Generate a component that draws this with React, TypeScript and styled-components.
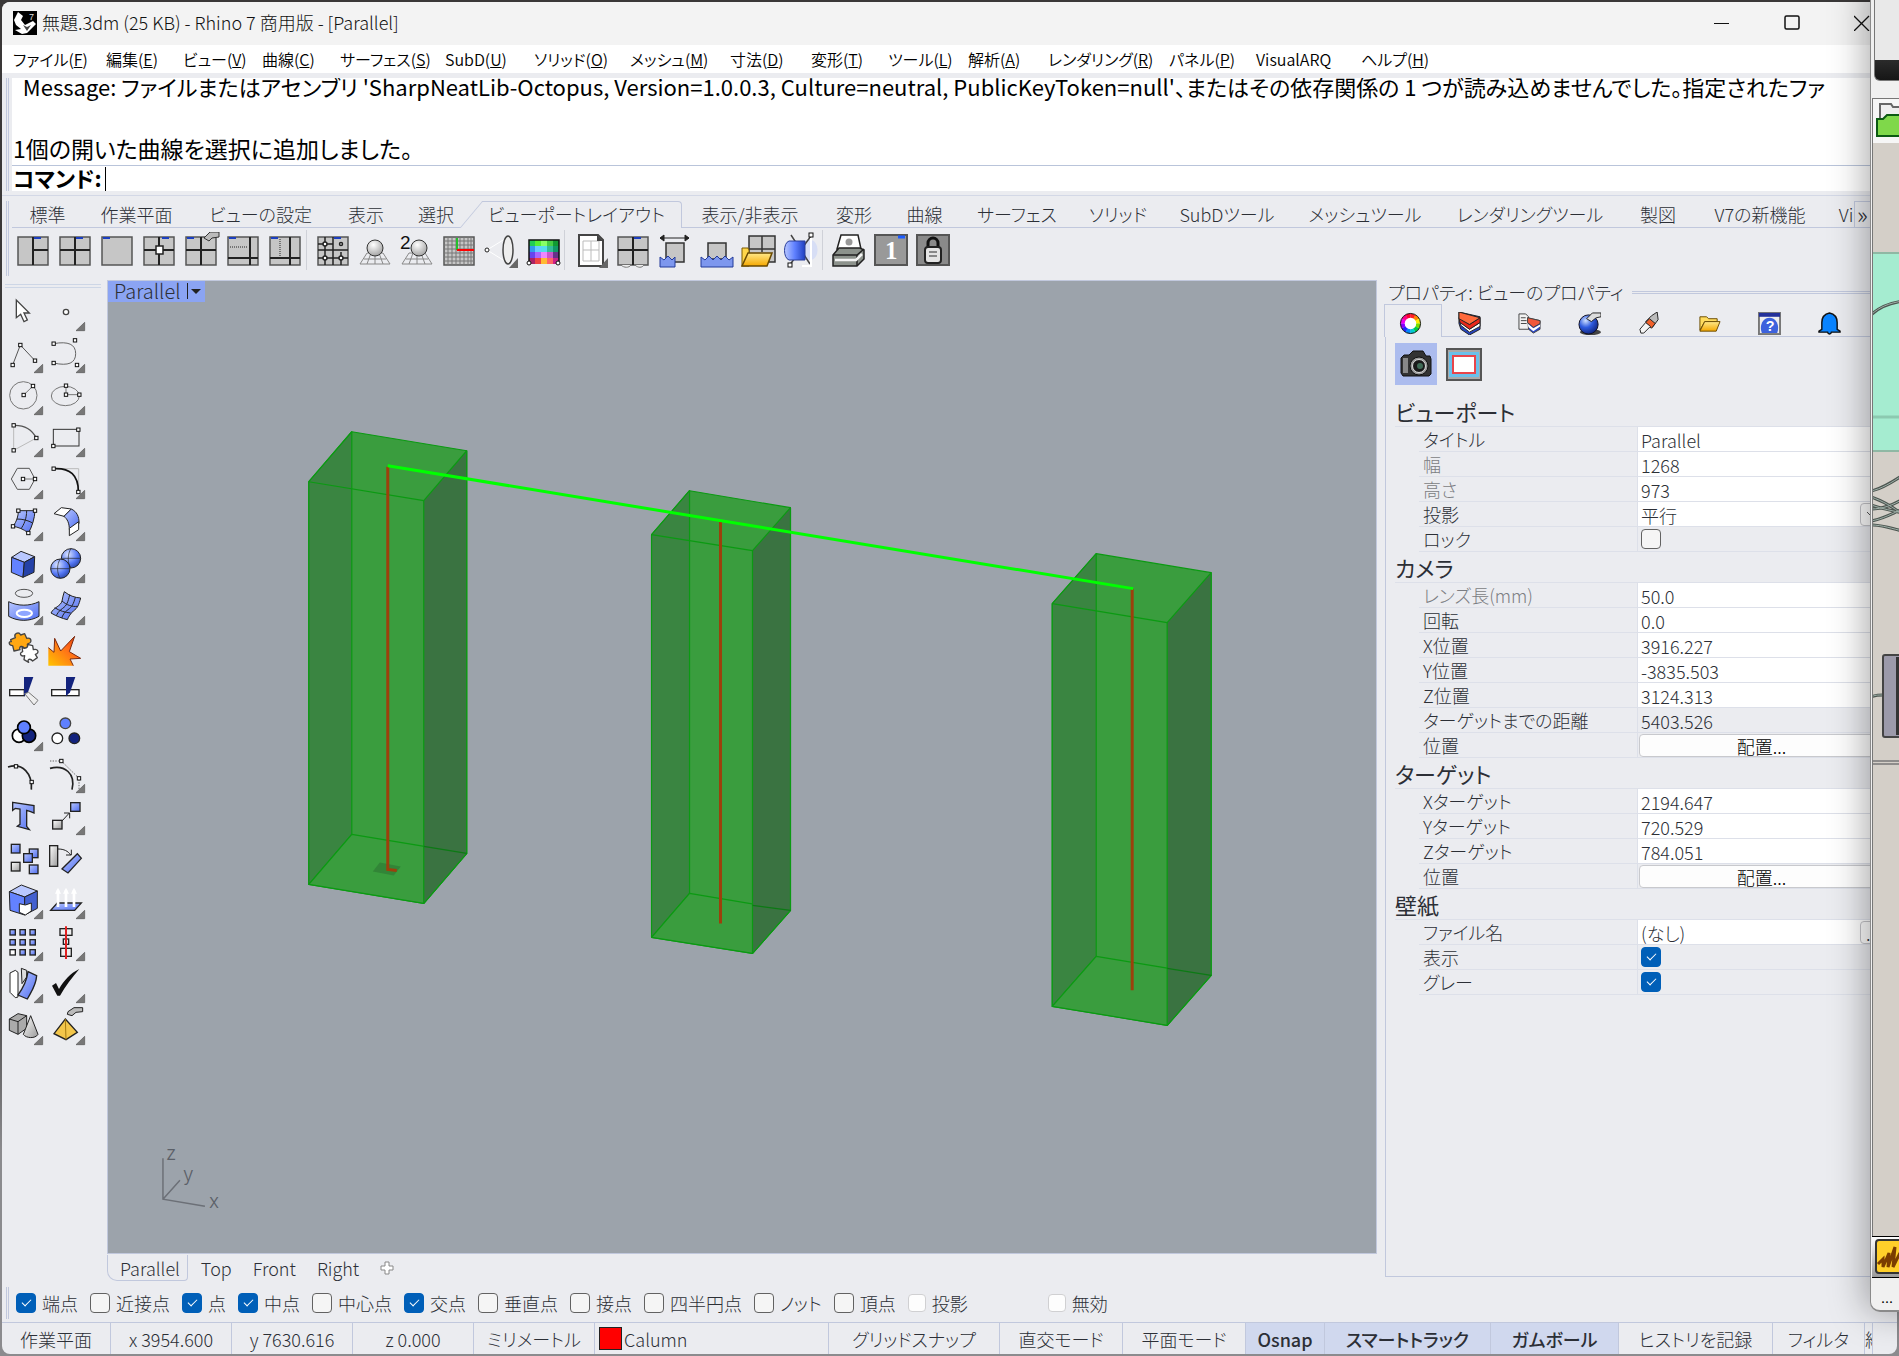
import React, { useState } from "react";
import styled, { createGlobalStyle, css } from "styled-components";

const C = {
  chrome: "#ebecf0",
  line: "#c1c8dd",
  soft: "#dde0e9",
  text: "#2c2f36",
  dim: "#7b7d82",
  blue: "#005fb8",
  active: "#d0d8ee",
  viewport: "#9ca3ab",
};

const Global = createGlobalStyle`
  *, *::before, *::after { box-sizing: border-box; }
  html, body { margin: 0; height: 100%; background: #3a3838; overflow: hidden; }
  body, button, input, select {
    font-family: "Noto Sans CJK JP", "Noto Sans", sans-serif;
    font-size: 18px;
    font-weight: 300;
    line-height: 24px;
    font-feature-settings: "palt";
    color: ${C.text};
  }
  button { background: none; border: 0; padding: 0; margin: 0; white-space: nowrap; }
  svg { display: block; }
`;

const Desktop = styled.div`
  position: relative;
  height: 100vh;
  padding: 2px;
  overflow: hidden;
  background: linear-gradient(#3a3838 0, #3a3838 70%, #8b8b8e 85%);
`;

const MainWindow = styled.div`
  display: flex;
  flex-direction: column;
  height: 100%;
  background: ${C.chrome};
  border-radius: 8px;
  overflow: hidden;
`;

/* ---------- title, menu, command ---------- */
const TitleBar = styled.header`
  display: flex;
  align-items: center;
  flex: 0 0 43px;
  padding: 0 0 2px 11px;
  background: #f3f3f3;
`;
const TitleText = styled.h1`
  flex: 1;
  margin: 0 0 0 5px;
  padding-bottom: 2px;
  font-size: 18px;
  font-weight: 300;
  color: #111;
`;
const WinButton = styled.button`
  width: 70px;
  height: 40px;
  display: grid;
  place-items: center;
`;
const MenuBar = styled.nav`
  display: flex;
  align-items: center;
  flex: 0 0 28px;
  padding-left: 11px;
  background: #fff;
`;
const MenuItem = styled.button<{ $w: number }>`
  flex: 0 0 ${(p) => p.$w}px;
  text-align: left;
  font-size: 16px;
  font-weight: 350;
  color: #000;
`;
const CommandArea = styled.section`
  display: flex;
  flex: 0 0 123px;
  padding: 5px 0 4px 4px;
  border-bottom: 1px solid #d3d8e6;
`;
const Grip = styled.div`
  flex: 0 0 3px;
  margin-right: 3px;
  border: solid ${C.line};
  border-width: 0 1px;
`;
const CommandBody = styled.div`
  flex: 1;
  min-width: 0;
  background: #fff;
`;
const History = styled.div`
  display: flex;
  flex-direction: column;
  justify-content: flex-end;
  height: 88px;
  overflow: hidden;
  border-bottom: 1px solid #b9c4da;
  color: #000;
  padding: 0 0 1px 1px;
`;
const HistoryLine = styled.p<{ $log?: boolean }>`
  margin: 0;
  flex: 0 0 31px;
  font-size: ${(p) => (p.$log ? 22 : 23)}px;
  font-weight: 400;
  line-height: 31px;
  white-space: pre;
`;
const Prompt = styled.div`
  display: flex;
  align-items: center;
  height: 25px;
  color: #000;
`;
const PromptLabel = styled.label`
  font-size: 22px;
  line-height: 22px;
  font-weight: 700;
  padding: 0 3px 3px 1px;
`;
const PromptInput = styled.input`
  flex: 1;
  height: 24px;
  border: 0;
  border-left: 1px solid #000;
  outline: 0;
  background: none;
  font-size: 22px;
`;

/* ---------- tool tabs ---------- */
const ToolArea = styled.section`
  display: flex;
  flex: 0 0 84px;
  padding: 5px 0 4px 4px;
`;
const ToolBody = styled.div`
  flex: 1;
  min-width: 0;
`;
const TabRow = styled.div`
  display: flex;
  height: 27px;
  padding-right: 5px;
`;
const TabStrip = styled.div`
  display: flex;
  flex: 1;
  min-width: 0;
  overflow: hidden;
  box-shadow: inset 0 -1px ${C.line};
`;
const ToolTab = styled.button<{ $active?: boolean; $w: number }>`
  position: relative;
  flex: 0 0 ${(p) => p.$w}px;
  padding-bottom: 2px;
  text-align: center;
  isolation: isolate;
  ${(p) =>
    p.$active &&
    css`
      &::before, &::after {
        content: "";
        position: absolute;
        z-index: -1;
        top: 0;
        bottom: 0;
        background: ${C.chrome};
        border: 1px solid ${C.line};
        border-bottom: 0;
      }
      &::before { left: 0; width: 60px; border-right: 0; transform: skewX(-40deg); }
      &::after { left: 30px; right: 0; border-left: 0; border-top-right-radius: 4px; }
    `}
`;
const MoreTabs = styled.button`
  flex: 0 0 38px;
  padding: 0 0 4px 2px;
  text-align: left;
  font-size: 24px;
  border: 1px solid ${C.line};
`;
const ToolRow = styled.div`
  display: flex;
  align-items: center;
  height: 44px;
`;
const ToolButton = styled.button`
  flex: 0 0 42px;
  height: 36px;
`;
const ToolSep = styled.i`
  flex: 0 0 6px;
  height: 40px;
  border-left: 1px solid #cfd1d8;
`;

/* ---------- work area ---------- */
const Work = styled.main`
  display: flex;
  flex: 1;
  min-height: 0;
`;
const Palette = styled.aside`
  flex: 0 0 105px;
`;
const PaletteGrip = styled.div`
  height: 4px;
  margin: 4px 6px 7px 3px;
  border: solid #cdd6e6;
  border-width: 1px 0;
`;
const PaletteGrid = styled.div`
  display: grid;
  grid-template-columns: 42px 42px;
  grid-auto-rows: 42px;
  padding-left: 6px;
`;
const PaletteButton = styled.button`
  width: 36px;
  height: 36px;
`;
const Center = styled.div`
  display: flex;
  flex-direction: column;
  flex: 1;
  min-width: 0;
`;
const Viewport = styled.div`
  position: relative;
  flex: 1;
  min-height: 0;
  background: ${C.viewport};
  border: 1px solid ${C.line};
`;
const ViewportLabel = styled.button`
  position: absolute;
  left: 0;
  top: 0;
  display: flex;
  align-items: center;
  gap: 5px;
  height: 21px;
  padding: 0 4px 2px 6px;
  line-height: 20px;
  font-size: 20px;
  background: #8ba4f3;
`;
const ViewTabs = styled.div`
  display: flex;
  align-items: center;
  flex: 0 0 28px;
  gap: 21px;
`;
const ViewTab = styled.button<{ $active?: boolean }>`
  height: 26px;
  ${(p) =>
    p.$active &&
    css`
      padding: 0 7px 0 12px;
      margin-right: -8px;
      border: 1px solid ${C.line};
      border-top: 0;
      border-radius: 0 0 4px 10px;
    `}
`;

/* ---------- properties ---------- */
const Properties = styled.aside`
  display: flex;
  flex-direction: column;
  flex: 0 0 520px;
  padding: 0 13px 5px 7px;
`;
const PanelTitle = styled.div`
  display: flex;
  align-items: center;
  height: 24px;
  gap: 8px;
  padding-left: 4px;
  &::after {
    content: "";
    flex: 1;
    height: 3px;
    border: solid ${C.line};
    border-width: 1px 0;
  }
`;
const PanelTabs = styled.div`
  display: flex;
  height: 33px;
  box-shadow: inset 0 -1px ${C.line};
`;
const PanelTab = styled.button<{ $active?: boolean }>`
  display: grid;
  place-items: center;
  flex: 0 0 60px;
  padding: 5px 5px 0 0;
  ${(p) =>
    p.$active &&
    css`
      flex-basis: 58px;
      background: ${C.chrome};
      border: 1px solid ${C.line};
      border-bottom: 0;
    `}
`;
const PanelBody = styled.div`
  flex: 1;
  min-height: 0;
  margin-left: 1px;
  padding: 6px 0 0 9px;
  border: 1px solid ${C.line};
  border-width: 0 0 1px 1px;
`;
const ModeRow = styled.div`
  display: flex;
  gap: 6px;
  margin-bottom: 11px;
`;
const ModeButton = styled.button<{ $active?: boolean }>`
  width: 42px;
  height: 42px;
  display: grid;
  place-items: center;
  background: ${(p) => (p.$active ? "#acbcee" : "none")};
`;
const SectionTitle = styled.h2`
  margin: 0;
  height: 31px;
  line-height: 30px;
  font-size: 22px;
  font-weight: 400;
  border-bottom: 1px solid ${C.soft};
`;
const PropRow = styled.div`
  display: grid;
  grid-template-columns: 219px 1fr;
  height: 25px;
  margin-left: 24px;
  border-bottom: 1px solid ${C.soft};
`;
const PropLabel = styled.label<{ $dim?: boolean }>`
  padding: 1px 0 0 4px;
  line-height: 23px;
  color: ${(p) => (p.$dim ? C.dim : C.text)};
  border-right: 1px solid ${C.soft};
`;
const PropInput = styled.input`
  width: 100%;
  min-width: 0;
  height: 24px;
  padding: 1px 0 0 3px;
  border: 0;
  background: #fff;
  outline: 0;
  &:disabled { background: none; color: ${C.text}; }
`;
const Split = styled.div`
  display: flex;
  background: #fff;
`;
const PropSelect = styled.select`
  flex: 1;
  height: 24px;
  padding: 1px 0 0 3px;
  border: 0;
  appearance: none;
  background: #fff;
`;
const SmallButton = styled.button`
  flex: 0 0 24px;
  height: 23px;
  margin-top: 1px;
  padding-left: 5px;
  line-height: 20px;
  text-align: left;
  border: 1px solid #c4c4c8;
  border-radius: 4px;
  background: #fdfdfd;
`;
const PlaceButton = styled.button`
  height: 23px;
  line-height: 20px;
  margin: 1px 0 0 1px;
  border: 1px solid #c8c9cd;
  border-radius: 4px;
  background: #fdfdfd;
  color: #000;
`;
const Check = styled.input.attrs({ type: "checkbox" })`
  appearance: none;
  position: relative;
  flex: 0 0 20px;
  width: 20px;
  height: 20px;
  margin: 0;
  border: 1px solid #626262;
  border-radius: 4px;
  background: #f5f5f5;
  &:checked { background: ${C.blue}; border-color: ${C.blue}; }
  &:checked::after {
    content: "";
    position: absolute;
    left: 5px;
    top: 5px;
    width: 9px;
    height: 5px;
    border: solid #fff;
    border-width: 0 0 1px 1px;
    transform: rotate(-45deg);
  }
  &:disabled { flex-basis: 18px; height: 18px; border-color: #d0d0d2; background: #fdfdfd; }
`;
const CheckCell = styled.div`
  display: flex;
  align-items: center;
  padding-left: 3px;
`;

/* ---------- bottom bars ---------- */
const SnapBar = styled.section`
  display: flex;
  align-items: center;
  flex: 0 0 40px;
  padding: 4px 0 2px 4px;
`;
const SnapGrip = styled(Grip)`
  height: 32px;
  margin-right: 7px;
`;
const SnapItem = styled.label<{ $after?: number }>`
  display: flex;
  align-items: center;
  gap: 6px;
  margin-right: ${(p) => p.$after ?? 12}px;
`;
const StatusBar = styled.footer`
  display: flex;
  flex: 0 0 32px;
  border-top: 1px solid ${C.line};
`;
const StatusCell = styled.button<{ $w: number; $on?: boolean; $left?: boolean }>`
  display: flex;
  align-items: center;
  justify-content: ${(p) => (p.$left ? "flex-start" : "center")};
  flex: 0 0 ${(p) => p.$w}px;
  overflow: hidden;
  border-right: 1px solid ${C.line};
  ${(p) => p.$on && css`background: ${C.active}; font-weight: 500;`}
`;
const LayerSwatch = styled.i`
  width: 23px;
  height: 23px;
  margin: 0 2px 0 4px;
  background: #f00;
  border: 1px solid #222;
`;

/* ---------- window lying over the right edge ---------- */
const SideWindow = styled.div`
  position: absolute;
  right: -60px;
  top: -20px;
  bottom: 44px;
  width: 89px;
  display: flex;
  flex-direction: column;
  padding-top: 20px;
  background: #f0f0f0;
  border: 2px solid #8a8a8a;
  border-width: 0 0 2px 1px;
  border-radius: 0 0 0 10px;
  box-shadow: -4px 0 36px rgba(0, 0, 0, 0.34);
`;
const SideTitle = styled.div`
  flex: 0 0 81px;
  margin-left: 3px;
  border: 1px solid #777;
  border-top: 0;
  border-radius: 0 0 0 6px;
  background: linear-gradient(#e9e9e9 0, #e9e9e9 60px, #2b2b2b 60px, #161616);
`;
const SideTools = styled.div`
  flex: 0 0 45px;
  margin: 17px 0 0 1px;
  border: 1px solid #777;
  border-bottom: 0;
  background: #f6f6f6;
`;
const SideCanvas = styled.div`
  flex: 1;
  min-height: 0;
  margin-left: 1px;
  overflow: hidden;
  background: #d4cfc8;
  border-left: 1px solid #777;
`;
const SideMarkov = styled.div`
  flex: 0 0 42px;
  margin-left: 1px;
  padding: 2px 3px;
  background: linear-gradient(#fff, #999);
  border: solid #000;
  border-width: 1px 0;
`;
const SideStatus = styled.div`
  flex: 0 0 32px;
  padding: 8px 0 0 10px;
  font-size: 16px;
  line-height: 20px;
  color: #000;
`;

/* ---------- drawing helpers ---------- */
const N = ({ x, y }: { x: number; y: number }) => (
  <rect x={x - 5} y={y - 5} width="10" height="10" fill="#fff" stroke="#111" strokeWidth="3" />
);
const Corner = () => <path d="M104 82V107H78Z" fill="#777" stroke="#555" strokeWidth="2" />;
const Defs = () => (
  <svg width="0" height="0" style={{ position: "absolute" }} aria-hidden="true">
    <defs>
      <linearGradient id="bl" x1="0" y1="0" x2="1" y2="1">
        <stop offset="0" stopColor="#b9c8ff" />
        <stop offset="1" stopColor="#4f6df0" />
      </linearGradient>
      <radialGradient id="ball" cx="0.35" cy="0.3" r="0.8">
        <stop offset="0" stopColor="#dbe5ff" />
        <stop offset="0.6" stopColor="#5578f5" />
        <stop offset="1" stopColor="#24409c" />
      </radialGradient>
      <radialGradient id="globe" cx="0.35" cy="0.3" r="0.8">
        <stop offset="0" stopColor="#cfe0ff" />
        <stop offset="0.45" stopColor="#2f5be0" />
        <stop offset="1" stopColor="#0a1c70" />
      </radialGradient>
      <radialGradient id="gray" cx="0.4" cy="0.3" r="0.8">
        <stop offset="0" stopColor="#fff" />
        <stop offset="1" stopColor="#999" />
      </radialGradient>
      <linearGradient id="gr" x1="0" y1="0" x2="1" y2="1">
        <stop offset="0" stopColor="#fff" />
        <stop offset="1" stopColor="#9a9a9a" />
      </linearGradient>
      <linearGradient id="gold" x1="0" y1="0" x2="0" y2="1">
        <stop offset="0" stopColor="#ffe98a" />
        <stop offset="1" stopColor="#f5a800" />
      </linearGradient>
      <linearGradient id="fire" x1="1" y1="0" x2="0" y2="1">
        <stop offset="0" stopColor="#e03a00" />
        <stop offset="0.4" stopColor="#ff6a1a" />
        <stop offset="1" stopColor="#ffc400" />
      </linearGradient>
      <linearGradient id="tube" x1="0" y1="0" x2="1" y2="0">
        <stop offset="0" stopColor="#b9c8ff" />
        <stop offset="0.5" stopColor="#5f80ff" />
        <stop offset="1" stopColor="#1f3fc0" />
      </linearGradient>
    </defs>
  </svg>
);

const G = "#777";
const K = "#222";

/* palette drawings: 108-unit boxes; the flag tells whether a fly-out corner is shown */
const palette: [string, boolean, React.ReactNode][] = [
  ["選択", false, <path d="M25 15V68L38 58 48 80 58 75 48 54H64Z" fill="#fff" stroke="#444" strokeWidth="4" />],
  ["点", true, <circle cx="48" cy="51" r="8" fill="#fff" stroke="#444" strokeWidth="4" />],
  ["ポリライン", true, <g><path d="M14 84L37 24 81 71" fill="none" stroke="#555" strokeWidth="3" /><N x={14} y={84} /><N x={37} y={24} /><N x={81} y={71} /></g>],
  ["曲線", true, <g><path d="M11 20C55 12 77 22 77 50S55 88 11 78" fill="none" stroke="#666" strokeWidth="3" /><N x={11} y={20} /><N x={75} y={10} /><N x={11} y={78} /><N x={81} y={84} /></g>],
  ["円", true, <g><circle cx="46" cy="49" r="41" fill="none" stroke={G} strokeWidth="3" /><path d="M47 48L75 21" stroke={G} strokeWidth="3" /><N x={47} y={48} /><N x={75} y={21} /></g>],
  ["楕円", true, <g><ellipse cx="46" cy="51" rx="42" ry="29" fill="none" stroke={G} strokeWidth="3" /><path d="M48 20V47H88" fill="none" stroke={G} strokeWidth="3" /><N x={48} y={20} /><N x={48} y={47} /><N x={88} y={47} /></g>],
  ["円弧", true, <g><path d="M17 13V88L85 51" fill="none" stroke="#bbb" strokeWidth="3" /><path d="M17 13C48 12 72 26 85 51" fill="none" stroke="#555" strokeWidth="4" /><N x={17} y={13} /><N x={85} y={51} /><N x={17} y={88} /></g>],
  ["長方形", true, <g><rect x="10" y="25" width="77" height="50" fill="none" stroke="#333" strokeWidth="3" /><N x={85} y={26} /><N x={10} y={75} /></g>],
  ["多角形", true, <g><path d="M10 48L28 16H64L81 48 64 79H28Z" fill="none" stroke="#555" strokeWidth="3" /><path d="M45 48H81" stroke={G} strokeWidth="3" /><N x={45} y={48} /><N x={81} y={48} /></g>],
  ["フィレット", true, <g><path d="M11 17H86V87" fill="none" stroke="#bbb" strokeWidth="3" /><path d="M11 17C60 14 86 36 85 87" fill="none" stroke="#111" strokeWidth="5" /><N x={11} y={17} /><N x={85} y={87} /></g>],
  ["サーフェス", true, <g><path d="M31 17H81C80 40 72 66 61 84 46 72 30 66 15 64 26 50 31 34 31 17Z" fill="url(#bl)" stroke={K} strokeWidth="3" /><path d="M56 17C56 40 48 60 38 72M26 42C44 42 60 46 74 54" fill="none" stroke={K} strokeWidth="3" /><N x={31} y={17} /><N x={81} y={17} /><N x={15} y={64} /><N x={61} y={84} /></g>],
  ["ロフト", true, <g><path d="M12 26L34 8 64 12 42 34Z" fill="#fff" stroke={K} strokeWidth="3" /><path d="M64 12C80 20 88 34 87 56L58 74C58 54 52 42 42 34Z" fill="url(#bl)" stroke={K} strokeWidth="3" /><path d="M58 70L86 50V74L58 92Z" fill="#fff" stroke={K} strokeWidth="3" /></g>],
  ["直方体", true, <g><path d="M39 13L80 29 49 46 11 31Z" fill="#b9c8ff" stroke={K} strokeWidth="3" /><path d="M11 31L49 46 45 91 10 76Z" fill="#6382ff" stroke={K} strokeWidth="3" /><path d="M80 29L49 46 45 91 78 76Z" fill="#2542a8" stroke={K} strokeWidth="3" /></g>],
  ["球", true, <g><circle cx="63" cy="34" r="29" fill="url(#ball)" stroke={K} strokeWidth="3" /><path d="M34 34H92M63 5C52 20 52 50 63 62" fill="none" stroke={K} strokeWidth="2" /><circle cx="31" cy="65" r="29" fill="url(#ball)" stroke={K} strokeWidth="3" /><path d="M2 65H60M31 36C20 50 20 80 31 94" fill="none" stroke={K} strokeWidth="2" /></g>],
  ["投影", true, <g><ellipse cx="48" cy="13" rx="26" ry="12" fill="none" stroke="#555" strokeWidth="3" /><path d="M2 38C30 52 65 52 93 38V82C65 98 30 98 2 82Z" fill="url(#bl)" stroke={K} strokeWidth="3" /><ellipse cx="49" cy="73" rx="23" ry="11" fill="#8fa6ff" stroke="#fff" strokeWidth="6" /></g>],
  ["メッシュ", true, <g><path d="M43 8C58 20 74 26 92 27 86 48 84 56 70 66 62 74 56 82 52 92 36 88 20 82 3 72 12 54 32 52 36 36 38 26 40 16 43 8Z" fill="url(#bl)" stroke={K} strokeWidth="3" /><path d="M59 17C54 40 50 50 38 58 26 66 22 74 19 80M76 25C70 46 66 54 54 62 42 70 38 80 35 87M36 36C50 48 66 54 82 52M14 56C30 66 44 70 62 72" fill="none" stroke={K} strokeWidth="3" /></g>],
  ["結合", false, <g><path d="M8 26L22 20C16 8 32 0 38 12L50 8 56 22C70 18 74 34 60 38L62 48 48 52C44 42 32 46 36 56L18 60 14 44C2 44 0 30 10 32Z" fill="#ffa712" stroke="#444" strokeWidth="4" strokeLinejoin="round" /><path d="M42 48C50 56 62 50 58 40L74 44 76 56C90 52 96 66 82 70L88 80 74 90C66 80 56 86 62 94L48 86 50 74C38 78 32 66 44 62Z" fill="#fff" stroke="#444" strokeWidth="4" strokeLinejoin="round" /></g>],
  ["分解", false, <g><path d="M-5 50L12 64 14 22 32 60 74 16 58 62 92 82 60 84 70 104H-5Z" fill="url(#fire)" /><path d="M-5 50L12 64 14 22 32 60 74 16 58 62 92 82 60 84 70 104" fill="none" stroke="#7a2a10" strokeWidth="3" /></g>],
  ["トリム", false, <g><rect x="5" y="50" width="44" height="18" fill="#fff" stroke={K} strokeWidth="4" /><path d="M48 12H76L60 58 48 70Z" fill="#13237d" /><path d="M50 62L62 58 90 82 78 96Z" fill="#eee" stroke="#777" strokeWidth="3" /></g>],
  ["分割", false, <g><rect x="5" y="50" width="82" height="18" fill="#fff" stroke={K} strokeWidth="4" /><path d="M48 12H76L60 58 48 70Z" fill="#13237d" /></g>],
  ["グループ", true, <g><circle cx="33" cy="62" r="20" fill="#fff" stroke="#000" strokeWidth="5" /><circle cx="63" cy="62" r="20" fill="#13237d" stroke="#000" strokeWidth="5" /><circle cx="48" cy="37" r="19" fill="#5f80ff" stroke="#000" strokeWidth="5" /></g>],
  ["グループ解除", false, <g><circle cx="46" cy="25" r="16" fill="#5f80ff" stroke="#444" strokeWidth="4" /><circle cx="22" cy="70" r="16" fill="#fff" stroke="#222" strokeWidth="4" /><circle cx="73" cy="70" r="16" fill="#13237d" stroke="#222" strokeWidth="4" /></g>],
  ["点編集", false, <g><path d="M0 30C44 16 74 50 70 98" fill="none" stroke={K} strokeWidth="5" /><N x={24} y={28} /><N x={71} y={75} /></g>],
  ["制御点", true, <g><path d="M0 34C44 22 78 50 66 98" fill="none" stroke={K} strokeWidth="5" /><path d="M0 12H34L87 64V98" fill="none" stroke="#666" strokeWidth="3" strokeDasharray="4 4" /><N x={34} y={12} /><N x={87} y={64} /></g>],
  ["文字", false, <path d="M14 10L78 20V42L68 38 56 34V82L64 92 28 82 36 76V30L22 28 14 34Z" fill="url(#bl)" stroke={K} strokeWidth="4" />],
  ["移動", true, <g><rect x="62" y="11" width="28" height="26" fill="url(#bl)" stroke={K} strokeWidth="4" /><rect x="8" y="64" width="28" height="26" fill="url(#gr)" stroke={K} strokeWidth="4" /><path d="M36 66L58 42M42 42H59V58" fill="none" stroke={K} strokeWidth="3" /></g>],
  ["コピー", false, <g fill="url(#bl)" stroke={K} strokeWidth="4"><rect x="10" y="10" width="26" height="26" /><rect x="64" y="24" width="26" height="26" /><rect x="47" y="38" width="26" height="26" /><rect x="64" y="72" width="26" height="26" /><rect x="10" y="64" width="26" height="26" fill="url(#gr)" /></g>],
  ["回転", false, <g><rect x="-1" y="14" width="24" height="62" fill="url(#gr)" stroke={K} strokeWidth="4" /><path d="M82 38L94 52 54 96 36 84Z" fill="url(#bl)" stroke={K} strokeWidth="4" /><path d="M24 24C42 24 54 30 62 42M64 26V42H48" fill="none" stroke={K} strokeWidth="3" /></g>],
  ["ブール演算", true, <g><path d="M40 6L88 24 50 42 4 26Z" fill="#b9c8ff" stroke={K} strokeWidth="3" /><path d="M4 26L50 42V96L6 82Z" fill="#6382ff" stroke={K} strokeWidth="3" /><path d="M88 24L50 42V96L88 76Z" fill="#4360d0" stroke={K} strokeWidth="3" /><path d="M34 62L52 66 70 60V84L52 96 34 88Z" fill="#fff" stroke={K} strokeWidth="3" /></g>],
  ["押し出し", true, <g><path d="M22 60H94L74 82H2Z" fill="url(#bl)" stroke={K} strokeWidth="4" /><path d="M24 72V20M48 72V20M72 72V20" stroke="#fff" strokeWidth="8" /><path d="M15 32L24 14 33 32ZM39 32L48 14 57 32ZM63 32L72 14 81 32Z" fill="#fff" /></g>],
  ["配列", true, <g stroke={K} strokeWidth="4">{[6, 36, 66].map((x) => [14, 44, 74].map((y) => <rect key={x + "-" + y} x={x} y={y} width="16" height="16" fill={x === 6 && y === 74 ? "#fff" : "url(#bl)"} />))}</g>],
  ["整列", true, <g fill="#eee" stroke={K} strokeWidth="4"><rect x="30" y="11" width="36" height="20" /><rect x="40" y="42" width="16" height="16" /><rect x="32" y="70" width="32" height="24" /><path d="M48 4V102" stroke="#e02020" strokeWidth="6" /></g>],
  ["曲げ", true, <g><path d="M6 18L22 10 30 16V90L22 92 6 76Z" fill="#fff" stroke={K} strokeWidth="3" /><path d="M40 4L56 10V30L42 50Z" fill="#ddd" stroke={K} strokeWidth="3" /><path d="M60 14L86 26C84 56 72 70 58 96L30 84C46 62 56 44 60 14Z" fill="url(#bl)" stroke={K} strokeWidth="4" /></g>],
  ["確認", true, <path d="M6 56L18 48 27 66C42 40 62 18 88 6 66 32 46 58 30 86H22Z" fill="#111" />],
  ["ソリッド編集", true, <g><path d="M4 30L30 14 56 20V58L30 76 4 64Z" fill="#aaa" stroke={K} strokeWidth="3" /><path d="M4 30L30 38 56 20M30 38V76" fill="none" stroke={K} strokeWidth="3" /><path d="M68 20L90 76C82 90 54 88 46 76Z" fill="url(#gr)" stroke={K} strokeWidth="3" /></g>],
  ["オプション", true, <g><path d="M46 30L82 70 48 92 12 74Z" fill="#f3c64a" stroke={K} strokeWidth="4" /><path d="M46 30L48 92" stroke="#a67c12" strokeWidth="3" /><path d="M54 8L72 -4H98V8L78 10 66 20 52 16Z" fill="#bbb" stroke={K} strokeWidth="3" /></g>],
];

/* toolbar drawings: 42 x 36 boxes */
const Pane = ({ children }: { children?: React.ReactNode }) => (
  <g stroke="#222" strokeWidth="2" fill="none">
    <rect x="6" y="5" width="30" height="28" fill="#c6c6c6" stroke="#555" strokeWidth="1.5" />
    {children}
  </g>
);
const Tick = ({ x = 7 }: { x?: number }) => <path d={`M${x} 6h7`} stroke="#1c3fbf" strokeWidth="2" />;
const Ball = ({ x }: { x: number }) => (
  <g>
    <path d="M13 21H29L36 32H6ZM10 27H32M17 21L13 32M21 21V32M25 21L29 32" fill="none" stroke="#888" />
    <circle cx={x} cy="16" r="8" fill="url(#gray)" stroke="#333" />
  </g>
);
const Fly = () => <path d="M38 26V36H29Z" fill="#666" />;
const toolbar: (null | [string, React.ReactNode])[] = [
  ["3分割", <Pane><path d="M21 5V33M21 18H36" /><Tick x={22} /></Pane>],
  ["4分割", <Pane><path d="M21 5V33M6 18H36" /><Tick x={22} /></Pane>],
  ["最大化", <Pane><Tick /></Pane>],
  ["同期", <Pane><path d="M21 5V33M6 18H36" /><Tick x={24} /><rect x="18" y="14" width="7" height="8" fill="#fff" strokeWidth="1.5" /></Pane>],
  ["設定", <g><Pane><path d="M21 5V33M6 18H36" /><Tick /></Pane><path d="M24 6L30 0H39V5L32 6 29 9Z" fill="#bbb" stroke="#333" /></g>],
  ["水平分割", <Pane><path d="M28 5V33M6 26H36" /><path d="M8 15H26" strokeDasharray="1 1" strokeWidth="1" /><Tick /></Pane>],
  ["垂直分割", <Pane><path d="M26 5V33M6 26H36" /><path d="M16 7V25" strokeDasharray="1 1" strokeWidth="1" /><Tick /></Pane>],
  null,
  ["グリッド", <Pane><path d="M13 5V33M29 20V33M21 5V33M6 12H21M6 18H36M6 26H36" strokeWidth="1.5" /><Tick x={22} /><g fill="#fff" strokeWidth="1.5"><circle cx="13" cy="12" r="2" /><circle cx="29" cy="12" r="1.5" /><circle cx="13" cy="26" r="2" /><circle cx="29" cy="26" r="2" /></g></Pane>],
  ["作業平面", <Ball x={21} />],
  ["2点", <g><Ball x={23} /><text x="4" y="17" fontSize="19" fontFamily="Liberation Sans" fill="#111">2</text></g>],
  ["グリッド軸", <g><Pane><path d="M10 5V33M14 5V33M18 5V33M22 5V33M26 5V33M30 5V33M33 5V33M6 9H36M6 13H36M6 17H36M6 21H36M6 25H36M6 29H36" stroke="#777" strokeWidth="1" /></Pane><path d="M19 6V18" stroke="#22c02c" strokeWidth="2" /><path d="M19 18H36" stroke="#f00" strokeWidth="2" /></g>],
  ["レンズ", <g><path d="M7 18L28 5M7 18L28 31" stroke="#fff" /><circle cx="7" cy="18" r="2" fill="#fff" stroke="#222" /><ellipse cx="28" cy="18" rx="5" ry="14" fill="#eee" stroke="#444" strokeWidth="1.5" /><Fly /></g>],
  ["カラー", <g>{["#2c5", "#5e3", "#8f6", "#4c4", "#193", "#39e", "#6cf", "#5de", "#3b9", "#196", "#64e", "#a6f", "#e8f", "#c5c", "#638", "#a26", "#e44", "#fb3", "#f66", "#c28"].map((f, i) => <rect key={i} x={7 + (i % 5) * 6} y={8 + Math.floor(i / 5) * 6} width="6" height="6" fill={f} />)}<path d="M7 31V8H37V31" fill="none" stroke="#111" strokeWidth="1.5" /><circle cx="7" cy="31" r="2" fill="#fff" stroke="#111" /><circle cx="36" cy="31" r="2" fill="#fff" stroke="#111" /></g>],
  null,
  ["レイアウト", <g><path d="M9 3H28L33 8V34H9Z" fill="#fff" stroke="#444" strokeWidth="2" /><path d="M13 9H29V29H13ZM21 9V29M13 18H29" fill="none" stroke="#bbb" /><path d="M27 3L33 9H27Z" fill="#444" /><Fly /></g>],
  ["詳細", <g><Pane><path d="M21 5V33M6 18H36" /><Tick x={22} /></Pane><path d="M9 33C12 36 17 36 19 33M23 33C26 36 30 36 32 33" fill="#eee" stroke="#777" /></g>],
  ["寸法", <g><path d="M6 6H35M6 6L10 3V9ZM35 6L31 3V9Z" fill="#222" stroke="#222" /><rect x="12" y="11" width="18" height="19" fill="#c6c6c6" stroke="#333" strokeWidth="1.5" /><path d="M6 25L10 28 14 24 18 28 21 25V35H6Z" fill="#7d97ee" stroke="#223a9a" /></g>],
  ["範囲", <g><rect x="12" y="11" width="18" height="16" fill="#c6c6c6" stroke="#333" strokeWidth="1.5" /><path d="M5 25L9 28 13 24 17 28 21 24 25 28 29 24 33 28 37 25V35H5Z" fill="#7d97ee" stroke="#223a9a" /></g>],
  ["開く", <g><path d="M11 4H37V30H11ZM24 4V20M11 17H37" fill="#c6c6c6" stroke="#333" strokeWidth="1.5" /><path d="M4 34V16H10L11 18V34Z" fill="#ffd64a" stroke="#7a5a00" /><path d="M10 21H34L29 34H4Z" fill="url(#gold)" stroke="#6a4a00" strokeWidth="1.5" /></g>],
  ["クリップ", <g><path d="M20 8H30C40 8 40 28 30 28H20Z" fill="#d7def5" /><path d="M11 3L30 32M31 4L9 34" stroke="#444" strokeWidth="1.5" /><path d="M9 9H25V28H9C3 26 3 11 9 9Z" fill="url(#tube)" stroke="#2a3f9a" /><path d="M31 6V34H22" fill="none" stroke="#fff" strokeWidth="2" /><g fill="#fff" stroke="#111"><rect x="29" y="1" width="4" height="4" /><rect x="8" y="31" width="4" height="4" /></g></g>],
  null,
  ["印刷", <g stroke="#222" strokeWidth="1.5"><path d="M13 3H30L33 17H9Z" fill="#fff" /><circle cx="21" cy="10" r="3.5" fill="#999" stroke="none" /><path d="M5 23L11 16H32L36 18V27L29 34H5Z" fill="#8c928c" /><path d="M5 23H29L36 17M29 23V34" fill="none" /><path d="M7 28H28L34 22" fill="none" stroke="#f4f4f4" strokeWidth="2.500" /></g>],
  ["番号", <g><rect x="5" y="3" width="32" height="30" fill="#999" stroke="#555" strokeWidth="2" /><path d="M28 5H35" stroke="#1c5cff" strokeWidth="3" /><text x="15" y="27" fontSize="25" fontWeight="700" fontFamily="Liberation Serif" fill="#fff">1</text></g>],
  ["ロック", <g><rect x="5" y="3" width="32" height="30" fill="#8a8a8a" stroke="#555" strokeWidth="2" /><path d="M16 16V11A5 5 0 0 1 26 11V16" fill="none" stroke="#111" strokeWidth="3" /><rect x="13" y="15" width="16" height="16" rx="3" fill="#e4e4e4" stroke="#222" strokeWidth="2" /><path d="M17 20H25M17 24H25" stroke="#888" strokeWidth="2" /></g>],
];

const panelIcons: [string, React.ReactNode][] = [
  ["プロパティ", <g>{["#f22", "#f80", "#fe0", "#7d0", "#0c4", "#0cc", "#08f", "#22f", "#80f", "#e0e", "#f08", "#f03"].map((c, i) => <path key={i} d="M12 4A8 8 0 0 1 16.200 5.200" transform={`rotate(${i * 30} 12 12)`} fill="none" stroke={c} strokeWidth="5" />)}<circle cx="12" cy="12" r="10.500" fill="none" stroke="#111" strokeWidth="1" /><circle cx="12" cy="12" r="6" fill="#fff" /></g>],
  ["レイヤ", <g stroke="#222"><path d="M1 0L23 5V18L12 24 3 18 1 12Z" fill="#2444c0" /><path d="M2 10L12 18 23 11V15L12 21 3 14Z" fill="#fff" /><path d="M1 6L12 13 23 6V11L12 18 2 11Z" fill="#e8281c" /><path d="M1 0L23 6 12 13 1 7Z" fill="#ff6a3c" /></g>],
  ["表示", <g stroke="#444"><path d="M1 2H8L11 5V18H1Z" fill="#f2f2f2" /><path d="M3 6H8M3 9H9M3 12H9" /><path d="M10 6L23 9V18L16 22 11 18Z" fill="#2846c8" /><path d="M10 12L16 17 23 13V15L16 20 11 16Z" fill="#fff" stroke="none" /><path d="M10 6L23 9V12L16 16 10 11Z" fill="#f0583a" /></g>],
  ["レンダリング", <g><ellipse cx="13" cy="21" rx="11" ry="3" fill="#444" /><circle cx="11" cy="13" r="10" fill="url(#globe)" stroke="#112" /><path d="M9 7L15 1H24V5L19 6 14 10Z" fill="#ddd" stroke="#222" /></g>],
  ["マテリアル", <g stroke="#222"><path d="M14 4L20 0 21 8 15 16 8 10Z" fill="#bbb" /><path d="M12 7L18 12 14 17 8 11Z" fill="#f0602a" /><path d="M8 11L13 15 6 22 3 22 2 18Z" fill="#f4f4f4" /></g>],
  ["ライブラリ", <g stroke="#6a4a00"><path d="M2 19V5H9L11 7H20V10H7Z" fill="#ffdc5e" /><path d="M7 10H23L19 20H2Z" fill="url(#gold)" /></g>],
  ["ヘルプ", <g><rect x="1" y="1" width="22" height="22" fill="#eee" stroke="#777" strokeWidth="2" /><rect x="1" y="1" width="22" height="4" fill="#23309a" /><path d="M4 22C1 14 5 6 12 6S23 14 20 22Z" fill="#3d62dd" /><text x="8" y="20" fontSize="15" fontWeight="700" fontFamily="Liberation Sans" fill="#fff">?</text></g>],
  ["通知", <path d="M12 1C17 2 20 6 20 11V18L23 20V21H14C13.500 23.500 10.500 23.500 10 21H1V20L4 18V11C4 6 7 2 12 1Z" fill="#0a84ff" stroke="#111" strokeWidth="1.500" />],
];

const menu: [string, string, number][] = [
  ["ファイル", "F", 93], ["編集", "E", 77], ["ビュー", "V", 79], ["曲線", "C", 78], ["サーフェス", "S", 105],
  ["SubD", "U", 89], ["ソリッド", "O", 96], ["メッシュ", "M", 100], ["寸法", "D", 81], ["変形", "T", 77],
  ["ツール", "L", 80], ["解析", "A", 80], ["レンダリング", "R", 121], ["パネル", "P", 87], ["VisualARQ", "", 105], ["ヘルプ", "H", 80],
];
const tabs: [string, number][] = [
  ["標準", 71], ["作業平面", 107], ["ビューの設定", 141], ["表示", 70], ["選択", 70], ["ビューポートレイアウト", 211],
  ["表示/非表示", 136], ["変形", 72], ["曲線", 69], ["サーフェス", 116], ["ソリッド", 86], ["SubDツール", 132],
  ["メッシュツール", 144], ["レンダリングツール", 186], ["製図", 70], ["V7の新機能", 134], ["Vi", 38],
];

type Prop = { label: string; value?: string; kind?: "select" | "check" | "button" | "file" | "plain"; dim?: boolean; on?: boolean };
const sections: { title: string; rows: Prop[] }[] = [
  { title: "ビューポート", rows: [
    { label: "タイトル", value: "Parallel" }, { label: "幅", value: "1268", dim: true }, { label: "高さ", value: "973", dim: true },
    { label: "投影", value: "平行", kind: "select" }, { label: "ロック", kind: "check" } ] },
  { title: "カメラ", rows: [
    { label: "レンズ長(mm)", value: "50.0", dim: true }, { label: "回転", value: "0.0" }, { label: "X位置", value: "3916.227" },
    { label: "Y位置", value: "-3835.503" }, { label: "Z位置", value: "3124.313" },
    { label: "ターゲットまでの距離", value: "5403.526", kind: "plain" }, { label: "位置", kind: "button" } ] },
  { title: "ターゲット", rows: [
    { label: "Xターゲット", value: "2194.647" }, { label: "Yターゲット", value: "720.529" }, { label: "Zターゲット", value: "784.051" },
    { label: "位置", kind: "button" } ] },
  { title: "壁紙", rows: [
    { label: "ファイル名", value: "(なし)", kind: "file" }, { label: "表示", kind: "check", on: true }, { label: "グレー", kind: "check", on: true } ] },
];

function Field({ p, id }: { p: Prop; id: string }) {
  switch (p.kind) {
    case "select":
      return (
        <Split>
          <PropSelect id={id}><option>{p.value}</option></PropSelect>
          <SmallButton aria-label="開く"><svg width="12" height="8"><path d="M1 1L6 6 11 1" fill="none" stroke="#555" /></svg></SmallButton>
        </Split>
      );
    case "check":
      return <CheckCell><Check id={id} defaultChecked={p.on} /></CheckCell>;
    case "button":
      return <PlaceButton id={id}>配置...</PlaceButton>;
    case "file":
      return <Split><PropInput id={id} defaultValue={p.value} /><SmallButton>...</SmallButton></Split>;
    default:
      return <PropInput id={id} defaultValue={p.value} disabled={p.kind === "plain"} />;
  }
}

const snaps: [string, boolean, boolean?, number?][] = [
  ["端点", true], ["近接点", false], ["点", true], ["中点", true], ["中心点", false], ["交点", true], ["垂直点", false],
  ["接点", false], ["四半円点", false], ["ノット", false], ["頂点", false], ["投影", false, true, 80], ["無効", false, true],
];
const status: { t: string; w: number; on?: boolean; left?: boolean; swatch?: boolean }[] = [
  { t: "作業平面", w: 109 }, { t: "x 3954.600", w: 121 }, { t: "y 7630.616", w: 121 }, { t: "z 0.000", w: 121 }, { t: "ミリメートル", w: 121 },
  { t: "Calumn", w: 234, left: true, swatch: true }, { t: "グリッドスナップ", w: 171 }, { t: "直交モード", w: 123 }, { t: "平面モード", w: 123 },
  { t: "Osnap", w: 79, on: true }, { t: "スマートトラック", w: 166, on: true }, { t: "ガムボール", w: 128, on: true },
  { t: "ヒストリを記録", w: 154 }, { t: "フィルタ", w: 92 }, { t: "絶", w: 8, left: true },
];

/* a translucent column: top-face corners (back-left, back-right, front-right, front-left) and its height */
type P2 = [number, number];
function Column({ bl, br, fr, fl, h }: { bl: P2; br: P2; fr: P2; fl: P2; h: number }) {
  const pt = (...a: P2[]) => a.map((q) => q.join(",")).join(" ");
  const d = ([x, y]: P2): P2 => [x, y + h];
  return (
    <g stroke="#0b9a12" strokeWidth="1.2" strokeLinejoin="round">
      <polygon points={pt(bl, br, d(br), d(fr), d(fl), fl)} fill="#3a9d3e" />
      <polygon points={pt(bl, fl, d(fl), d(bl))} fill="#3a8541" />
      <polygon points={pt(d(bl), d(fl), d(fr), d(br))} fill="#3a9d3e" />
      <polygon points={pt(br, fr, d(fr), d(br))} fill="#3a7341" />
      <polyline points={pt(fl, fr)} fill="none" />
      <line x1={fr[0]} y1={d(bl)[1] + 12} x2={br[0]} y2={d(br)[1]} stroke="#0c7a14" />
    </g>
  );
}

function Scene() {
  return (
    <svg width="100%" height="100%" viewBox="107 281 1269 973" preserveAspectRatio="xMidYMid slice" aria-label="Parallel">
      <Column bl={[351, 432]} br={[466, 451]} fr={[423, 501]} fl={[308, 482]} h={403} />
      <Column bl={[689, 491]} br={[790, 508]} fr={[752, 551]} fl={[651, 535]} h={403} />
      <Column bl={[1096, 554]} br={[1211, 573]} fr={[1167, 623]} fl={[1052, 604]} h={403} />
      <path d="M379 863L400 867 393 876 372 872Z" fill="#328537" />
      <path d="M387 467V870L396 871M720 522V924M1132 589V991" fill="none" stroke="#9c400c" strokeWidth="3" />
      <path d="M387 466L1133 589" stroke="#0f0" strokeWidth="3" />
      <path d="M162 1159V1200L204 1207M162 1200L179 1181" fill="none" stroke="#6c7077" strokeWidth="1.500" />
      <g fill="#5b6068" fontSize="19" fontFamily="Inter, sans-serif">
        <text x="165" y="1161">z</text>
        <text x="182" y="1182">y</text>
        <text x="208" y="1209">x</text>
      </g>
    </svg>
  );
}

const wires =
  "M-2 172C6 164 16 160 30 158M-2 348C8 346 18 340 30 332M-2 354C10 358 20 364 30 372M-2 366C10 366 20 362 30 356M-2 362C10 366 20 368 30 370M-2 378C10 376 20 370 30 366M-2 382C10 382 20 386 30 388M-2 554C2 552 4 552 10 552";

export default function App() {
  const [command, setCommand] = useState("");
  return (
    <Desktop>
      <Global />
      <Defs />
      <MainWindow>
        <TitleBar>
          <svg width="24" height="24" viewBox="0 0 24 24">
            <rect width="24" height="24" fill="#000" />
            <path d="M5 1L10 5 8 9 12 14 20 10 23 13 14 22 9 23 2 19 8 18 3 14 1 9Z" fill="#fff" />
            <path d="M10 14L14 16 18 14 14 20Z" fill="#444" />
            <text x="16" y="9" fontSize="9" fill="#ddd" fontFamily="Liberation Sans">7</text>
          </svg>
          <TitleText>無題.3dm (25 KB) - Rhino 7 商用版 - [Parallel]</TitleText>
          <WinButton aria-label="最小化"><svg width="16" height="16"><path d="M0 8.500H15" stroke="#111" /></svg></WinButton>
          <WinButton aria-label="最大化"><svg width="16" height="16"><rect x="1" y="1" width="14" height="13" rx="1.500" fill="none" stroke="#111" strokeWidth="1.500" /></svg></WinButton>
          <WinButton aria-label="閉じる"><svg width="16" height="16"><path d="M0 1L15 16M15 1L0 16" stroke="#111" strokeWidth="1.300" /></svg></WinButton>
        </TitleBar>

        <MenuBar>
          {menu.map(([t, k, w]) => (
            <MenuItem key={t} $w={w}>{t}{k && <>(<u>{k}</u>)</>}</MenuItem>
          ))}
        </MenuBar>

        <CommandArea>
          <Grip />
          <CommandBody>
            <History>
              <HistoryLine $log>{"  Message: ファイルまたはアセンブリ 'SharpNeatLib-Octopus, Version=1.0.0.3, Culture=neutral, PublicKeyToken=null'、またはその依存関係の 1 つが読み込めませんでした。指定されたファ"}</HistoryLine>
              <HistoryLine> </HistoryLine>
              <HistoryLine>1個の開いた曲線を選択に追加しました。</HistoryLine>
            </History>
            <Prompt>
              <PromptLabel htmlFor="command">コマンド:</PromptLabel>
              <PromptInput id="command" value={command} onChange={(e) => setCommand(e.target.value)} />
            </Prompt>
          </CommandBody>
        </CommandArea>

        <ToolArea>
          <Grip />
          <ToolBody>
            <TabRow>
              <TabStrip>
                {tabs.map(([t, w]) => (
                  <ToolTab key={t} $w={w} $active={t === "ビューポートレイアウト"}>{t}</ToolTab>
                ))}
              </TabStrip>
              <MoreTabs>»</MoreTabs>
            </TabRow>
            <ToolRow>
              {toolbar.map((b, i) =>
                b ? (
                  <ToolButton key={i} aria-label={b[0]}><svg width="42" height="36" viewBox="0 0 42 36">{b[1]}</svg></ToolButton>
                ) : (
                  <ToolSep key={i} />
                )
              )}
            </ToolRow>
          </ToolBody>
        </ToolArea>

        <Work>
          <Palette>
            <PaletteGrip />
            <PaletteGrid>
              {palette.map(([label, fly, art], i) => (
                <PaletteButton key={i} aria-label={label}>
                  <svg width="36" height="36" viewBox="0 0 108 108" overflow="visible">{art}{fly && <Corner />}</svg>
                </PaletteButton>
              ))}
            </PaletteGrid>
          </Palette>

          <Center>
            <Viewport>
              <Scene />
              <ViewportLabel>
                Parallel
                <svg width="15" height="16"><path d="M1.500 0V16" stroke="#222" /><path d="M5 6H15L10 11Z" fill="#222" /></svg>
              </ViewportLabel>
            </Viewport>
            <ViewTabs>
              <ViewTab $active>Parallel</ViewTab>
              <ViewTab>Top</ViewTab>
              <ViewTab>Front</ViewTab>
              <ViewTab>Right</ViewTab>
              <ViewTab aria-label="追加"><svg width="15" height="15"><path d="M5 1H9V5H13V9H9V13H5V9H1V5H5Z" fill="#fff" stroke="#888" /></svg></ViewTab>
            </ViewTabs>
          </Center>

          <Properties>
            <PanelTitle>プロパティ: ビューのプロパティ</PanelTitle>
            <PanelTabs>
              {panelIcons.map(([label, art], i) => (
                <PanelTab key={label} aria-label={label} $active={i === 0}><svg width="23" height="23" viewBox="0 0 24 24">{art}</svg></PanelTab>
              ))}
            </PanelTabs>
            <PanelBody>
              <ModeRow>
                <ModeButton $active aria-label="カメラ">
                  <svg width="32" height="28" viewBox="0 0 32 28">
                    <path d="M1 8L4 5H9L13 1H23L26 6H30L31 9V24L29 26H3L1 23Z" fill="#333" stroke="#111" />
                    <rect x="3" y="8" width="5" height="15" fill="#888" />
                    <circle cx="19" cy="16" r="9" fill="#999" stroke="#111" />
                    <circle cx="19" cy="16" r="6.500" fill="#1a1a1a" stroke="#ddd" />
                    <circle cx="20" cy="16" r="3" fill="#3f6a55" />
                  </svg>
                </ModeButton>
                <ModeButton aria-label="フレーム">
                  <svg width="36" height="33" viewBox="0 0 36 33">
                    <rect x="1" y="1" width="34" height="31" fill="#aaa" stroke="#555" strokeWidth="2" />
                    <rect x="3" y="4" width="30" height="25" fill="#6ac0ea" />
                    <rect x="7" y="8" width="22" height="17" fill="#fff" stroke="#e8454a" strokeWidth="2" />
                  </svg>
                </ModeButton>
              </ModeRow>
              {sections.map((s, si) => (
                <React.Fragment key={s.title}>
                  <SectionTitle>{s.title}</SectionTitle>
                  {s.rows.map((p, ri) => (
                    <PropRow key={ri}>
                      <PropLabel htmlFor={`p${si}-${ri}`} $dim={p.dim}>{p.label}</PropLabel>
                      <Field p={p} id={`p${si}-${ri}`} />
                    </PropRow>
                  ))}
                </React.Fragment>
              ))}
            </PanelBody>
          </Properties>
        </Work>

        <SnapBar>
          <SnapGrip />
          {snaps.map(([t, on, off, after]) => (
            <SnapItem key={t} $after={after}><Check defaultChecked={on} disabled={off} />{t}</SnapItem>
          ))}
        </SnapBar>
        <StatusBar>
          {status.map((s) => (
            <StatusCell key={s.t} $w={s.w} $on={s.on} $left={s.left}>{s.swatch && <LayerSwatch />}{s.t}</StatusCell>
          ))}
        </StatusBar>
      </MainWindow>

      <SideWindow>
        <SideTitle />
        <SideTools>
          <svg width="40" height="42" viewBox="0 0 40 42">
            <path d="M7 32V5H18L20 8H40V20Z" fill="#eee" stroke="#666" strokeWidth="2" />
            <path d="M4 37V20H10L14 16H40V37Z" fill="#7fd84a" stroke="#0b5a12" strokeWidth="2" />
          </svg>
        </SideTools>
        <SideCanvas>
          <svg width="80" height="1090" viewBox="0 0 80 1090">
            <rect x="-2" y="110" width="90" height="198" fill="#a5ecd0" stroke="#8fb8a4" strokeWidth="2" />
            <path d="M0 274H80" stroke="#8cc9b0" strokeWidth="3" />
            <path d={wires} fill="none" stroke="#4c5550" strokeWidth="3" />
            <path d={wires} fill="none" stroke="#9fb0a8" strokeWidth="1" />
            <rect x="10" y="512" width="40" height="82" rx="2" fill="#9c9aaa" stroke="#444" strokeWidth="2" />
            <rect x="23" y="514" width="20" height="78" fill="#333" />
            <path d="M0 618H80M0 621H80" stroke="#777" strokeWidth="1.500" />
          </svg>
        </SideCanvas>
        <SideMarkov>
          <svg width="40" height="35" viewBox="0 0 40 35">
            <rect x="1" y="1" width="48" height="33" rx="3" fill="#ffcf2a" stroke="#333" strokeWidth="2" />
            <path d="M3 25L8 20V28L14 14 13 28 20 8 18 28 25 14" fill="none" stroke="#7a3c00" strokeWidth="3" />
          </svg>
        </SideMarkov>
        <SideStatus>...</SideStatus>
      </SideWindow>
    </Desktop>
  );
}
